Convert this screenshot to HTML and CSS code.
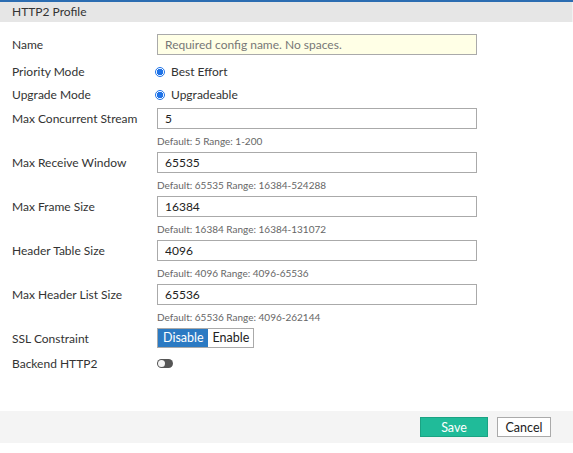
FILE: index.html
```html
<!DOCTYPE html>
<html>
<head>
<meta charset="utf-8">
<link rel="stylesheet" href="styles.css">
</head>
<body>
<div class="topbar"></div>
<div class="header">HTTP2 Profile</div>
<div class="form">
  <div class="row row-name">
    <div class="label">Name</div>
    <input class="input input-req" type="text" placeholder="Required config name. No spaces.">
  </div>
  <div class="row row-radio">
    <div class="label">Priority Mode</div>
    <div class="radio"><span class="dot"></span>Best Effort</div>
  </div>
  <div class="row row-radio">
    <div class="label">Upgrade Mode</div>
    <div class="radio"><span class="dot"></span>Upgradeable</div>
  </div>
  <div class="field">
    <div class="row"><div class="label">Max Concurrent Stream</div><input class="input" type="text" value="5"></div>
    <div class="hint">Default: 5 Range: 1-200</div>
  </div>
  <div class="field">
    <div class="row"><div class="label">Max Receive Window</div><input class="input" type="text" value="65535"></div>
    <div class="hint">Default: 65535 Range: 16384-524288</div>
  </div>
  <div class="field">
    <div class="row"><div class="label">Max Frame Size</div><input class="input" type="text" value="16384"></div>
    <div class="hint">Default: 16384 Range: 16384-131072</div>
  </div>
  <div class="field">
    <div class="row"><div class="label">Header Table Size</div><input class="input" type="text" value="4096"></div>
    <div class="hint">Default: 4096 Range: 4096-65536</div>
  </div>
  <div class="field">
    <div class="row"><div class="label">Max Header List Size</div><input class="input" type="text" value="65536"></div>
    <div class="hint">Default: 65536 Range: 4096-262144</div>
  </div>
  <div class="row row-ssl">
    <div class="label">SSL Constraint</div>
    <div class="seg"><span class="seg-btn active">Disable</span><span class="seg-btn">Enable</span></div>
  </div>
  <div class="row row-toggle">
    <div class="label">Backend HTTP2</div>
    <span class="toggle"><span class="knob"></span></span>
  </div>
</div>
<div class="footer">
  <button class="btn btn-save">Save</button>
  <button class="btn btn-cancel">Cancel</button>
</div>
</body>
</html>
```
FILE: styles.css
```css
html, body {
  margin: 0;
  padding: 0;
  background: #fff;
  font-family: Lato, "Open Sans", sans-serif;
  font-size: 12px;
  color: #333;
}
.topbar {
  height: 2px;
  background: #2c6db2;
}
.header {
  height: 20px;
  line-height: 20px;
  background: #e6e6e6;
  padding-left: 12px;
  font-size: 12px;
  color: #333;
  border-right: 1px solid #f2f2f2;
}
.form {
  padding: 12px 0 0 12px;
  height: 389px;
  box-sizing: border-box;
}
.row {
  display: flex;
  align-items: center;
}
.label {
  width: 145px;
  flex: none;
}
.input {
  width: 320px;
  height: 21px;
  box-sizing: border-box;
  border: 1px solid #aaa;
  border-radius: 0;
  padding: 0 7px;
  margin: 0;
  font-family: Lato, "Open Sans", sans-serif;
  font-size: 12px;
  color: #222;
  background: #fff;
  outline: none;
}
.input-req {
  background: #ffffe6;
}
.input-req::placeholder {
  color: #777;
}
.row-name {
  margin-bottom: 5px;
}
.row-radio {
  height: 23px;
}
.row-radio + .field {
  margin-top: 2px;
}
.radio {
  display: flex;
  align-items: center;
  margin-left: -2px;
}
.dot {
  width: 10px;
  height: 10px;
  box-sizing: border-box;
  border-radius: 50%;
  border: 1px solid #1e73e8;
  background: radial-gradient(circle, #1e73e8 0 3px, #fff 3.5px);
  margin-right: 6px;
}
.hint {
  margin: 5px 0 4px 145px;
  line-height: 14px;
  font-size: 10px;
  color: #666;
}
.row-ssl {
  margin-top: 4px;
  height: 20px;
}
.seg {
  display: flex;
  border: 1px solid #aaa;
  height: 20px;
  box-sizing: border-box;
}
.seg-btn {
  padding: 0 4px 0 5px;
  line-height: 18px;
  font-size: 12.5px;
  color: #222;
  background: #fff;
}
.seg-btn.active {
  background: #2b7ac3;
  color: #fff;
}
.row-toggle {
  height: 24px;
  margin-top: 3px;
}
.toggle {
  width: 16px;
  height: 9px;
  border-radius: 5px;
  background: #555;
  position: relative;
  display: inline-block;
}
.knob {
  position: absolute;
  left: 1px;
  top: 1px;
  width: 7px;
  height: 7px;
  border-radius: 50%;
  background: #f4f4f4;
}
.footer {
  height: 32px;
  background: #f4f4f4;
  display: flex;
  justify-content: flex-end;
  align-items: center;
  padding-right: 22px;
  gap: 9px;
}
.btn {
  height: 20px;
  box-sizing: border-box;
  font-family: Lato, "Open Sans", sans-serif;
  font-size: 12.5px;
  padding: 0;
  margin: 0;
  border-radius: 0;
  cursor: pointer;
}
.btn-save {
  width: 68px;
  background: #20bb99;
  border: 1px solid #1ba383;
  color: #fff;
}
.btn-cancel {
  width: 54px;
  background: #fff;
  border: 1px solid #aaa;
  color: #222;
}
```
